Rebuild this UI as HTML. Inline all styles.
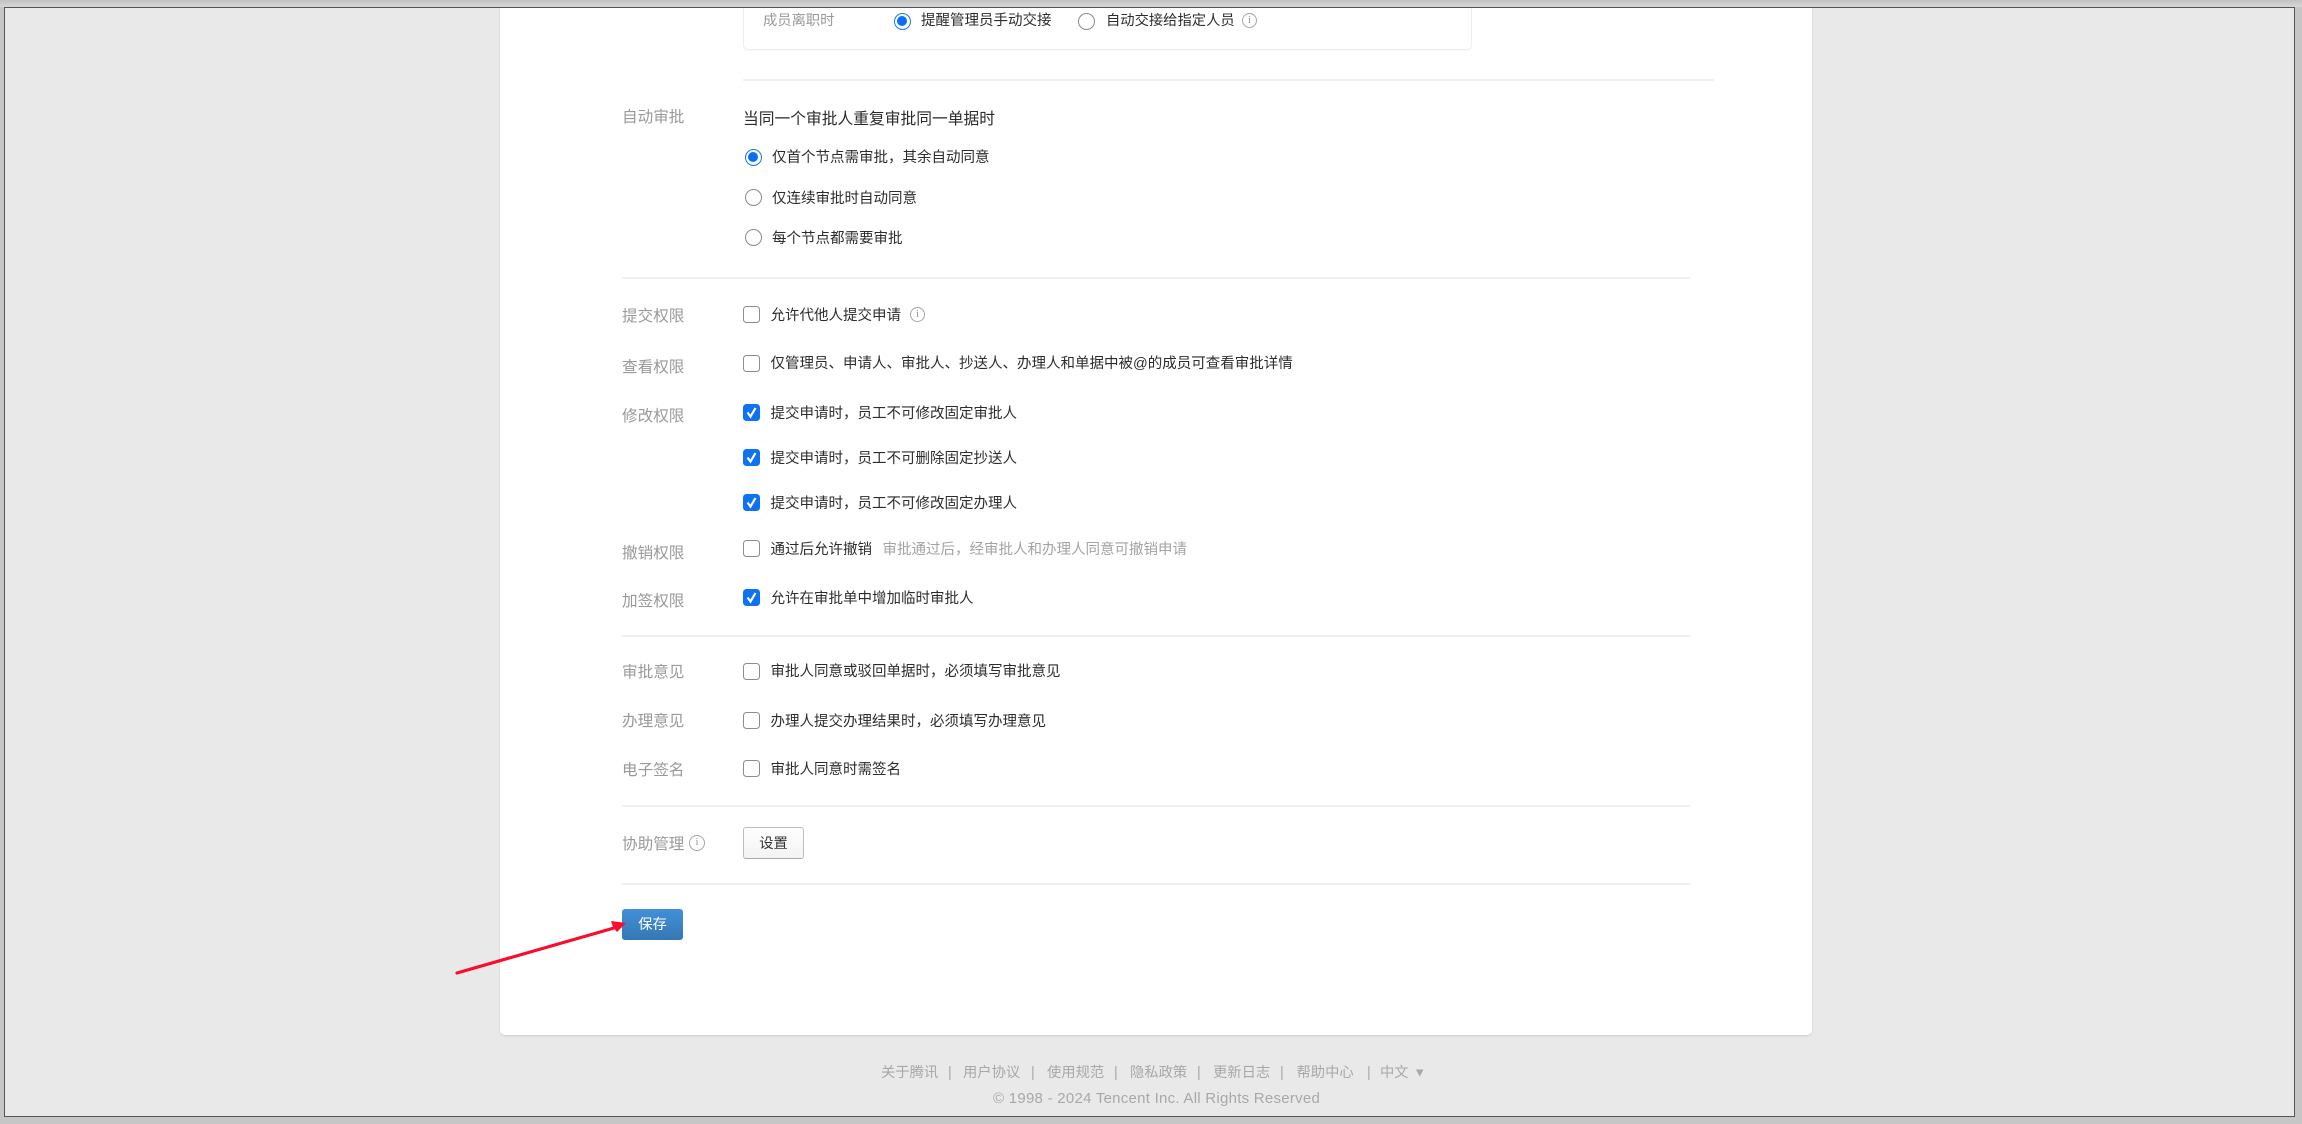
<!DOCTYPE html>
<html lang="zh">
<head>
<meta charset="utf-8">
<title>审批设置</title>
<style>
html,body{margin:0;padding:0;width:2302px;height:1124px;overflow:hidden;background:#c6c6c6}
body{position:relative;font-family:"Liberation Sans","Noto Sans CJK SC",sans-serif}
#top{position:absolute;left:0;top:0;width:2302px;height:7px;background:linear-gradient(#c2c2c2,#d6d6d6)}
#inner{position:absolute;left:4px;top:7px;width:2289px;height:1108px;border:1px solid #555;background:#e9e9e9;overflow:hidden}
#card{position:absolute;left:500px;top:-20px;width:1312px;height:1055px;background:#fff;border-radius:5px;box-shadow:0 1px 2px rgba(0,0,0,.12)}
#sub{position:absolute;left:743px;top:-20px;width:727px;height:68px;border:1px solid #eee;border-radius:5px;background:#fff;box-shadow:0 1px 1px rgba(0,0,0,.03)}
.abs{position:absolute}
.hr{position:absolute;height:2px;background:#f0f0f0}
.t{position:absolute;height:24px;line-height:24px;white-space:nowrap;font-size:14.5px;color:#2c2c2c;filter:blur(.3px)}
.l{font-size:15.6px;color:#999}
.g{color:#a3a3a3}
.h{font-size:15.75px;color:#2a2a2a}
.f{font-size:14.3px;color:#a8a8a8}
.r{position:absolute;width:17px;height:17px;margin-top:.5px;box-sizing:border-box;border-radius:50%;border:1.3px solid #8a8a8a;background:#fff;filter:blur(.25px)}
.r.on{border:1.6px solid #1677f2}
.r.on::after{content:"";position:absolute;left:2.1px;top:2.1px;width:10px;height:10px;border-radius:50%;background:#0b6ff2}
.c{position:absolute;width:17px;height:17px;margin-top:.5px;box-sizing:border-box;border-radius:3.5px;border:1.3px solid #8c8c8c;background:#fff;filter:blur(.25px)}
.c.on{border:0;background:#0f72f2}
.c svg{position:absolute;left:0;top:0}
.i{position:absolute;width:15px;height:15px;box-sizing:border-box;border:1px solid #a5a5a5;border-radius:50%;font:10px/13px "Liberation Serif",serif;color:#8f8f8f;text-align:center;filter:blur(.25px)}
#set{position:absolute;left:743px;top:827px;width:61px;height:32px;box-sizing:border-box;border:1px solid #bdbdbd;border-bottom-color:#a9a9a9;border-radius:3px;background:linear-gradient(#fff,#f3f3f3);font-size:14.3px;line-height:32px;text-align:center;color:#333}
#save{position:absolute;left:622px;top:909px;width:61px;height:31px;border-radius:3px;background:linear-gradient(#4290d8,#3478b4);border:0;color:#fff;font-size:14.3px;line-height:33px;text-align:center}
</style>
</head>
<body>
<div id="top"></div>
<div class="abs" style="left:0;top:0;width:2302px;height:1124px">
  <div id="inner" style="left:4px;top:7px"></div>
</div>
<div class="abs" style="left:5px;top:8px;width:2289px;height:1108px;overflow:hidden">
  <div style="position:absolute;left:-5px;top:-8px;width:2302px;height:1124px">
    <div id="card"></div>
    <div id="sub"></div>

    <div class="t l" style="left:763px;top:9px;font-size:14.3px">成员离职时</div>
    <div class="r on" style="left:894px;top:12px"></div>
    <div class="t" style="left:921px;top:9px">提醒管理员手动交接</div>
    <div class="r" style="left:1078px;top:12px"></div>
    <div class="t" style="left:1106px;top:9px;font-size:14.3px">自动交接给指定人员</div>
    <div class="i" style="left:1242px;top:13px">i</div>

    <div class="hr" style="left:743px;top:79px;width:971px"></div>

    <div class="t l" style="left:622px;top:106px">自动审批</div>
    <div class="t h" style="left:743px;top:108px">当同一个审批人重复审批同一单据时</div>
    <div class="r on" style="left:745px;top:148px"></div>
    <div class="t" style="left:772px;top:146px">仅首个节点需审批，其余自动同意</div>
    <div class="r" style="left:745px;top:188px"></div>
    <div class="t" style="left:772px;top:187px">仅连续审批时自动同意</div>
    <div class="r" style="left:745px;top:228px"></div>
    <div class="t" style="left:772px;top:227px">每个节点都需要审批</div>

    <div class="hr" style="left:622px;top:277px;width:1068px"></div>

    <div class="t l" style="left:622px;top:305px">提交权限</div>
    <div class="c" style="left:743px;top:305px"></div>
    <div class="t" style="left:770.5px;top:304px">允许代他人提交申请</div>
    <div class="i" style="left:910px;top:307px">i</div>

    <div class="t l" style="left:622px;top:356px">查看权限</div>
    <div class="c" style="left:743px;top:354px"></div>
    <div class="t" style="left:770.5px;top:352px">仅管理员、申请人、审批人、抄送人、办理人和单据中被@的成员可查看审批详情</div>

    <div class="t l" style="left:622px;top:405px">修改权限</div>
    <div class="c on" style="left:743px;top:403px"><svg width="17" height="17" viewBox="0 0 17 17"><path d="M4.5 8.5 7.5 12.5 12.5 4" fill="none" stroke="#fff" stroke-width="2.2"/></svg></div>
    <div class="t" style="left:770.5px;top:402px">提交申请时，员工不可修改固定审批人</div>
    <div class="c on" style="left:743px;top:448px"><svg width="17" height="17" viewBox="0 0 17 17"><path d="M4.5 8.5 7.5 12.5 12.5 4" fill="none" stroke="#fff" stroke-width="2.2"/></svg></div>
    <div class="t" style="left:770.5px;top:447px">提交申请时，员工不可删除固定抄送人</div>
    <div class="c on" style="left:743px;top:493px"><svg width="17" height="17" viewBox="0 0 17 17"><path d="M4.5 8.5 7.5 12.5 12.5 4" fill="none" stroke="#fff" stroke-width="2.2"/></svg></div>
    <div class="t" style="left:770.5px;top:492px">提交申请时，员工不可修改固定办理人</div>

    <div class="t l" style="left:622px;top:542px">撤销权限</div>
    <div class="c" style="left:743px;top:539px"></div>
    <div class="t" style="left:770.5px;top:538px">通过后允许撤销</div>
    <div class="t g" style="left:882.5px;top:538px">审批通过后，经审批人和办理人同意可撤销申请</div>

    <div class="t l" style="left:622px;top:590px">加签权限</div>
    <div class="c on" style="left:743px;top:588px"><svg width="17" height="17" viewBox="0 0 17 17"><path d="M4.5 8.5 7.5 12.5 12.5 4" fill="none" stroke="#fff" stroke-width="2.2"/></svg></div>
    <div class="t" style="left:770.5px;top:587px">允许在审批单中增加临时审批人</div>

    <div class="hr" style="left:622px;top:635px;width:1068px"></div>

    <div class="t l" style="left:622px;top:661px">审批意见</div>
    <div class="c" style="left:743px;top:662px"></div>
    <div class="t" style="left:770.5px;top:660px">审批人同意或驳回单据时，必须填写审批意见</div>

    <div class="t l" style="left:622px;top:710px">办理意见</div>
    <div class="c" style="left:743px;top:711px"></div>
    <div class="t" style="left:770.5px;top:710px">办理人提交办理结果时，必须填写办理意见</div>

    <div class="t l" style="left:622px;top:759px">电子签名</div>
    <div class="c" style="left:743px;top:759px"></div>
    <div class="t" style="left:770.5px;top:758px">审批人同意时需签名</div>

    <div class="hr" style="left:622px;top:805px;width:1068px"></div>

    <div class="t l" style="left:622px;top:833px">协助管理</div>
    <div class="i" style="left:689px;top:835px;width:16px;height:16px;line-height:14px">i</div>
    <div id="set">设置</div>

    <div class="hr" style="left:622px;top:883px;width:1068px"></div>

    <div id="save">保存</div>

    <svg class="abs" style="left:0;top:0" width="2302" height="1124" viewBox="0 0 2302 1124">
      <path d="M457 973 614 928" fill="none" stroke="#fb0b2c" stroke-width="3.2" stroke-linecap="round"/>
      <path d="M626 923 611 921 613 927 617 932Z" fill="#fb0b2c"/>
    </svg>

    <div class="t f" style="left:881px;top:1061px">关于腾讯</div>
    <div class="t f" style="left:948px;top:1061px">|</div>
    <div class="t f" style="left:963px;top:1061px">用户协议</div>
    <div class="t f" style="left:1031px;top:1061px">|</div>
    <div class="t f" style="left:1047px;top:1061px">使用规范</div>
    <div class="t f" style="left:1114px;top:1061px">|</div>
    <div class="t f" style="left:1130px;top:1061px">隐私政策</div>
    <div class="t f" style="left:1197px;top:1061px">|</div>
    <div class="t f" style="left:1213px;top:1061px">更新日志</div>
    <div class="t f" style="left:1280px;top:1061px">|</div>
    <div class="t f" style="left:1296.5px;top:1061px">帮助中心</div>
    <div class="t f" style="left:1367px;top:1061px">|</div>
    <div class="t f" style="left:1380px;top:1061px">中文</div>
    <svg class="abs" style="left:1416px;top:1069px" width="8" height="8" viewBox="0 0 8 8"><path d="M0 .5H7.5L3.75 7.5Z" fill="#a8a8a8"/></svg>
    <div class="t f" style="left:993px;top:1087px;font-size:15px;letter-spacing:.26px">© 1998 - 2024 Tencent Inc. All Rights Reserved</div>
  </div>
</div>
</body>
</html>
